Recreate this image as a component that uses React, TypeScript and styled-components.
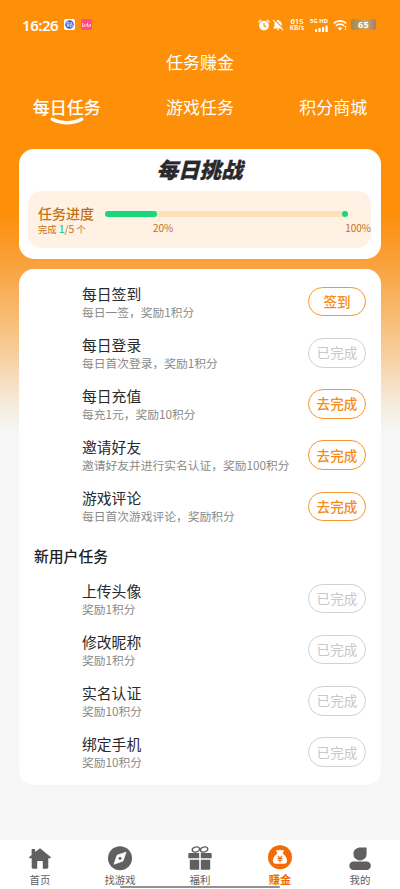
import React from 'react';
import styled, { createGlobalStyle } from 'styled-components';

const GlobalStyle = createGlobalStyle`
  * { box-sizing: border-box; }
  body {
    margin: 0;
    font-family: "Noto Sans CJK SC", "Noto Sans", sans-serif;
    background: #f6f6f6;
  }
`;

const Screen = styled.div`
  position: relative;
  display: flex;
  flex-direction: column;
  width: 400px;
  height: 889px;
  overflow: hidden;
  background: linear-gradient(#fd8f09 0, #fd8f09 214px, #f9a33f 267px, #f8c384 333px, #f5ead9 402px, #f6f6f6 432px);
`;

const StatusBar = styled.div`
  display: flex;
  align-items: center;
  height: 49px;
  padding: 0 24px 0 22px;
  color: #fff;
`;

const Clock = styled.span`
  width: 42px;
  font: 600 15px/20px "Noto Sans", sans-serif;
  letter-spacing: -0.45px;
`;

const AppBadge = styled.span<{ $pink?: boolean }>`
  display: flex;
  align-items: center;
  justify-content: center;
  width: 11px;
  height: 11px;
  margin-right: 5.5px;
  border-radius: 2px;
  background: ${p => (p.$pink ? '#ff4c83' : '#fff')};
`;

const StatusIcons = styled.div`
  display: flex;
  align-items: center;
  height: 20px;
  margin-left: auto;
`;

const Bell = styled.span`
  display: flex;
  margin-left: 2px;
`;

const Speed = styled.span`
  width: 18px;
  margin: 0 4px;
  text-align: center;
  white-space: nowrap;
  font: 600 7.7px/7px "Noto Sans", sans-serif;
  div + div { font-size: 6.6px; line-height: 6px; }
`;

const Wifi = styled.span`
  display: flex;
  margin-left: 5px;
`;

const Battery = styled.span`
  width: 25px;
  height: 11px;
  margin-left: 4px;
  border-radius: 2px;
  background: linear-gradient(90deg, #a68645, #c7a66a 60%, #a08070);
  font: 700 9px/11px "Noto Sans", sans-serif;
  letter-spacing: 0.3px;
  text-align: center;
`;

const PageTitle = styled.h1`
  height: 26px;
  margin: 0;
  color: #fff;
  font-size: 17px;
  font-weight: 400;
  line-height: 26px;
  text-align: center;
`;

const Tabs = styled.nav`
  display: grid;
  grid-template-columns: repeat(3, 133.3px);
  height: 74px;
  padding-top: 18px;
`;

const Tab = styled.div<{ $active?: boolean }>`
  display: flex;
  flex-direction: column;
  align-items: center;
  color: #fff;
  font-size: 17px;
  font-weight: ${p => (p.$active ? 500 : 400)};
  line-height: 27px;
  svg { margin-top: -3px; }
`;

const Card = styled.section`
  margin: 0 19px;
  border-radius: 15px;
  background: #fff;
`;

const ChallengeCard = styled(Card)`
  height: 110px;
  padding: 6px 10px 0 9px;
`;

const ChallengeTitle = styled.h2`
  height: 28px;
  margin: 0 0 8px;
  color: #29282c;
  font-size: 21.5px;
  font-style: italic;
  font-weight: 900;
  line-height: 28px;
  text-align: center;
  -webkit-text-stroke: 0.3px #29282c;
`;

const ProgressPanel = styled.div`
  display: flex;
  height: 57px;
  border-radius: 14px;
  background: #fff1e3;
  color: #c27217;
`;

const ProgressLabel = styled.div`
  width: 77px;
  padding: 13px 0 0 10px;
  white-space: nowrap;
`;

const ProgressName = styled.div`
  font-size: 14px;
  font-weight: 500;
  line-height: 18px;
`;

const ProgressCount = styled.div`
  font-size: 9.3px;
  line-height: 14px;
  span { font-size: 10.3px; }
  b { color: #1fd47c; font-weight: 500; }
`;

const ProgressMain = styled.div`
  flex: 1;
  padding-top: 20px;
`;

const Track = styled.div`
  display: flex;
  align-items: center;
  justify-content: space-between;
  width: 243px;
  height: 6px;
  border-radius: 3px;
  background: #ffe1b9;
`;

const Fill = styled.div`
  width: 52px;
  height: 6px;
  border-radius: 3px;
  background: #1ad67a;
`;

const EndDot = styled.div`
  width: 6px;
  height: 6px;
  border-radius: 50%;
  background: #1ad67a;
`;

const Marks = styled.div`
  display: flex;
  justify-content: space-between;
  width: 266px;
  padding: 4px 0 0 48px;
  font-size: 10px;
  line-height: 14px;
`;

const TaskCard = styled(Card)`
  height: 516px;
  margin-top: 10px;
  padding: 7px 15px 0;
`;

const TaskRow = styled.div`
  display: flex;
  align-items: center;
  height: 51.2px;
  padding-left: 48px;
`;

const TaskText = styled.div`
  flex: 1;
  padding-top: 1px;
  white-space: nowrap;
`;

const TaskName = styled.div`
  color: #292929;
  font-size: 14.8px;
  line-height: 18px;
`;

const TaskHint = styled.div`
  color: #8a8a8a;
  font-size: 11.75px;
  line-height: 17px;
`;

const ActionButton = styled.button<{ $done?: boolean }>`
  width: 58px;
  height: 29.5px;
  padding: 0;
  border: 1px solid ${p => (p.$done ? '#d0d0d0' : '#f5972a')};
  border-radius: 15px;
  background: #fff;
  color: ${p => (p.$done ? '#c8c8c8' : '#f38d18')};
  font-family: inherit;
  font-size: 13.6px;
  font-weight: ${p => (p.$done ? 400 : 500)};
  line-height: 27px;
`;

const SectionTitle = styled.h3`
  height: 41px;
  margin: 0;
  padding-top: 14px;
  color: #222;
  font-size: 14.8px;
  font-weight: 500;
  line-height: 20px;
`;

const BottomNav = styled.nav`
  display: grid;
  grid-template-columns: repeat(5, 80px);
  height: 49px;
  margin-top: auto;
  background: #fff;
`;

const NavItem = styled.div<{ $active?: boolean }>`
  display: flex;
  flex-direction: column;
  align-items: center;
  padding-top: 5px;
  color: ${p => (p.$active ? '#f46b06' : '#5e5e5e')};
  font-size: ${p => (p.$active ? 11.2 : 10.4)}px;
  font-weight: ${p => (p.$active ? 700 : 400)};
  line-height: 16px;
  svg { margin-bottom: ${p => (p.$active ? 0 : 1)}px; flex: none; }
`;

const HomeIndicator = styled.div`
  position: absolute;
  left: 120px;
  bottom: 1px;
  width: 160px;
  height: 2.5px;
  border-radius: 2px;
  background: #929090;
`;

type Task = { name: string; hint: string; action: string };

const dailyTasks: Task[] = [
  { name: '每日签到', hint: '每日一签，奖励1积分', action: '签到' },
  { name: '每日登录', hint: '每日首次登录，奖励1积分', action: '已完成' },
  { name: '每日充值', hint: '每充1元，奖励10积分', action: '去完成' },
  { name: '邀请好友', hint: '邀请好友并进行实名认证，奖励100积分', action: '去完成' },
  { name: '游戏评论', hint: '每日首次游戏评论，奖励积分', action: '去完成' },
];

const newcomerTasks: Task[] = [
  { name: '上传头像', hint: '奖励1积分', action: '已完成' },
  { name: '修改昵称', hint: '奖励1积分', action: '已完成' },
  { name: '实名认证', hint: '奖励10积分', action: '已完成' },
  { name: '绑定手机', hint: '奖励10积分', action: '已完成' },
];

const TaskList = ({ tasks }: { tasks: Task[] }) => (
  <>
    {tasks.map(t => (
      <TaskRow key={t.name}>
        <TaskText>
          <TaskName>{t.name}</TaskName>
          <TaskHint>{t.hint}</TaskHint>
        </TaskText>
        <ActionButton $done={t.action === '已完成'}>{t.action}</ActionButton>
      </TaskRow>
    ))}
  </>
);

const AlarmIcon = () => (
  <svg width="12" height="12" viewBox="0 0 12 12" fill="none">
    <circle cx="6" cy="6.6" r="4.9" fill="#fff" />
    <path d="M.9 2.7 2.7 1.2M11.1 2.7 9.3 1.2" stroke="#fff" strokeWidth="1.4" strokeLinecap="round" />
    <path d="M6 4v2.8l2 .9" stroke="#fd8f09" strokeWidth="1.1" strokeLinecap="round" />
  </svg>
);

const MutedBellIcon = () => (
  <svg width="12" height="12" viewBox="0 0 12 12" fill="none">
    <path d="M6 .8c.7 0 1 .4 1.1.9 1.7.5 2.5 1.900 2.500 3.500V7.400l1.200 1.700v.5H1.200v-.5l1.200-1.700V5.200c0-1.600.8-3 2.500-3.500C5 1.200 5.300.8 6 .8ZM4.800 10.200h2.400c-.3 1.300-2.100 1.300-2.400 0Z" fill="#fff" />
    <path d="M2.100.4 11.700 10" stroke="#fd8f09" strokeWidth="1.200" />
    <path d="M1.200 1.100 10.900 10.900" stroke="#fff" strokeWidth="1.100" strokeLinecap="round" />
  </svg>
);

const Network = styled.div`
  display: flex;
  flex-direction: column;
  align-items: flex-end;
  width: 18px;
  font: 700 5.9px/7px "Noto Sans", sans-serif;
  white-space: nowrap;
`;

const SignalIcon = () => (
  <svg width="14" height="7" viewBox="0 0 14 7" fill="#fff">
    <rect x="1" y="4" width="2.2" height="3" rx=".6" />
    <rect x="4.5" y="3" width="2.2" height="4" rx=".6" />
    <rect x="8" y="2" width="2.2" height="5" rx=".6" />
    <rect x="11.5" y=".5" width="2.2" height="6.5" rx=".6" />
  </svg>
);

const WifiIcon = () => (
  <svg width="14" height="12" viewBox="0 0 14 12" fill="none" stroke="#fff" strokeWidth="1.7">
    <path d="M.8 4.400c3.500-3.500 8.900-3.500 12.400 0M2.900 6.800c2.300-2.300 5.900-2.300 8.200 0" />
    <path d="M4.700 9.100c1.200-1.200 3.400-1.200 4.600 0L7 11.500Z" fill="#fff" stroke="none" />
    <path d="M12.500 7v1.800M12.500 9.700v1.300" strokeWidth="1.300" />
  </svg>
);

const ActiveArc = () => (
  <svg width="34" height="9" viewBox="0 0 34 9" fill="none">
    <path d="M2.300 2.200Q17 9.500 31.700 2.200" stroke="#fff" strokeWidth="3.300" strokeLinecap="round" />
  </svg>
);

const HomeIcon = () => (
  <svg width="24" height="26" viewBox="0 0 24 26">
    <path d="M12 3.200 22.700 12c.5.500.1 1.300-.5 1.300h-1.900v9c0 .9-.5 1.400-1.300 1.400h-4.200v-6.600c0-.6-.4-1-1-1h-3.600c-.6 0-1 .4-1 1v6.600H5c-.8 0-1.300-.5-1.300-1.400v-9H1.800c-.7 0-1-.8-.5-1.300L3.600 10V5c0-.6.3-.9.900-.9h1.800c.6 0 .9.300.9.900v2Z" fill="#606060" />
  </svg>
);

const CompassIcon = () => (
  <svg width="24" height="26" viewBox="0 0 24 26">
    <circle cx="12" cy="13.200" r="12" fill="#606060" />
    <path d="M18 7.200 14.900 16.100 6 19.200 9.100 10.300Z" fill="#fff" stroke="#fff" strokeWidth=".8" strokeLinejoin="round" />
    <circle cx="12" cy="13.200" r="1.500" fill="#606060" />
  </svg>
);

const GiftIcon = () => (
  <svg width="24" height="26" viewBox="0 0 24 26">
    <g fill="none" stroke="#606060" strokeWidth="1.400">
      <ellipse cx="7.900" cy="4.500" rx="3.700" ry="2.400" transform="rotate(-15 7.900 4.500)" />
      <ellipse cx="16.100" cy="4.500" rx="3.700" ry="2.400" transform="rotate(-15 16.100 4.500)" />
    </g>
    <path d="M1.200 8h10v5.300H.3V9c0-.6.300-1 .9-1Zm11.600 0h10c.6 0 .9.400.9 1v4.300H12.800ZM1.800 14.800h9.400v10H2.900c-.7 0-1.100-.4-1.100-1.100Zm11 0h9.400v8.900c0 .7-.4 1.100-1.100 1.100h-8.300Z" fill="#606060" />
  </svg>
);

const MoneyBagIcon = () => (
  <svg width="24" height="26" viewBox="0 0 24 26" fill="none">
    <circle cx="12" cy="12.200" r="12" fill="#f46b06" />
    <path d="M8.200 6.300c0-1.300 1.200-1.500 2.100-.8.800-.9 2.600-.9 3.400 0 .9-.7 2.100-.5 2.100.8l-1.100 2.200c2.700 1.600 4.400 4.700 4.400 7.200 0 2-1.200 3.100-3.200 3.100H8.100c-2 0-3.200-1.100-3.200-3.100 0-2.500 1.700-5.600 4.400-7.200Z" fill="#fff" />
    <path d="m9.900 10.900 2.100 2.300 2.100-2.300M9.300 13.500h5.400M9.600 15.300h4.800M12 13.200v4" stroke="#f46b06" strokeWidth="1.100" />
  </svg>
);

const ProfileIcon = () => (
  <svg width="24" height="26" viewBox="0 0 24 26" fill="#606060">
    <path d="M18.600 2.800V8.900a6.600 6.600 0 0 1-13.200 0c0-4.300 3.500-6.400 7-6.400h5.500c.5 0 .7 0 .7.300Z" />
    <rect x="1.300" y="16.600" width="21.500" height="8.500" rx="4.200" />
  </svg>
);

export default function App() {
  return (
    <Screen>
      <GlobalStyle />
      <StatusBar>
        <Clock>16:26</Clock>
        <AppBadge>
          <svg width="9" height="9" viewBox="0 0 9 9">
            <circle cx="4.500" cy="4.500" r="4.300" fill="#3556c8" />
            <path d="M2 2h2v3H2Zm0 5 1-2 1 2M6 1.800v2.500M6 3h1.500M5 4.700h2.300v2H5Z" fill="none" stroke="#fff" strokeWidth=".7" />
          </svg>
        </AppBadge>
        <AppBadge $pink>
          <svg width="9" height="6" viewBox="0 0 9 6" fill="none" stroke="#ffd7e4" strokeWidth=".9">
            <path d="M.5 1v3.500h1.800V2.300M4 2v2.500M5.500 1v3.500h1.700V2.300M8.500 2v2.500" />
          </svg>
        </AppBadge>
        <StatusIcons>
          <AlarmIcon />
          <Bell><MutedBellIcon /></Bell>
          <Speed><div>615</div><div>KB/s</div></Speed>
          <Network><span>5G HD</span><SignalIcon /></Network>
          <Wifi><WifiIcon /></Wifi>
          <Battery>65</Battery>
        </StatusIcons>
      </StatusBar>
      <PageTitle>任务赚金</PageTitle>
      <Tabs>
        <Tab $active>每日任务<ActiveArc /></Tab>
        <Tab>游戏任务</Tab>
        <Tab>积分商城</Tab>
      </Tabs>
      <ChallengeCard>
        <ChallengeTitle>每日挑战</ChallengeTitle>
        <ProgressPanel>
          <ProgressLabel>
            <ProgressName>任务进度</ProgressName>
            <ProgressCount>完成 <span><b>1</b>/5</span> 个</ProgressCount>
          </ProgressLabel>
          <ProgressMain>
            <Track><Fill /><EndDot /></Track>
            <Marks><span>20%</span><span>100%</span></Marks>
          </ProgressMain>
        </ProgressPanel>
      </ChallengeCard>
      <TaskCard>
        <TaskList tasks={dailyTasks} />
        <SectionTitle>新用户任务</SectionTitle>
        <TaskList tasks={newcomerTasks} />
      </TaskCard>
      <BottomNav>
        <NavItem><HomeIcon />首页</NavItem>
        <NavItem><CompassIcon />找游戏</NavItem>
        <NavItem><GiftIcon />福利</NavItem>
        <NavItem $active><MoneyBagIcon />赚金</NavItem>
        <NavItem><ProfileIcon />我的</NavItem>
      </BottomNav>
      <HomeIndicator />
    </Screen>
  );
}
